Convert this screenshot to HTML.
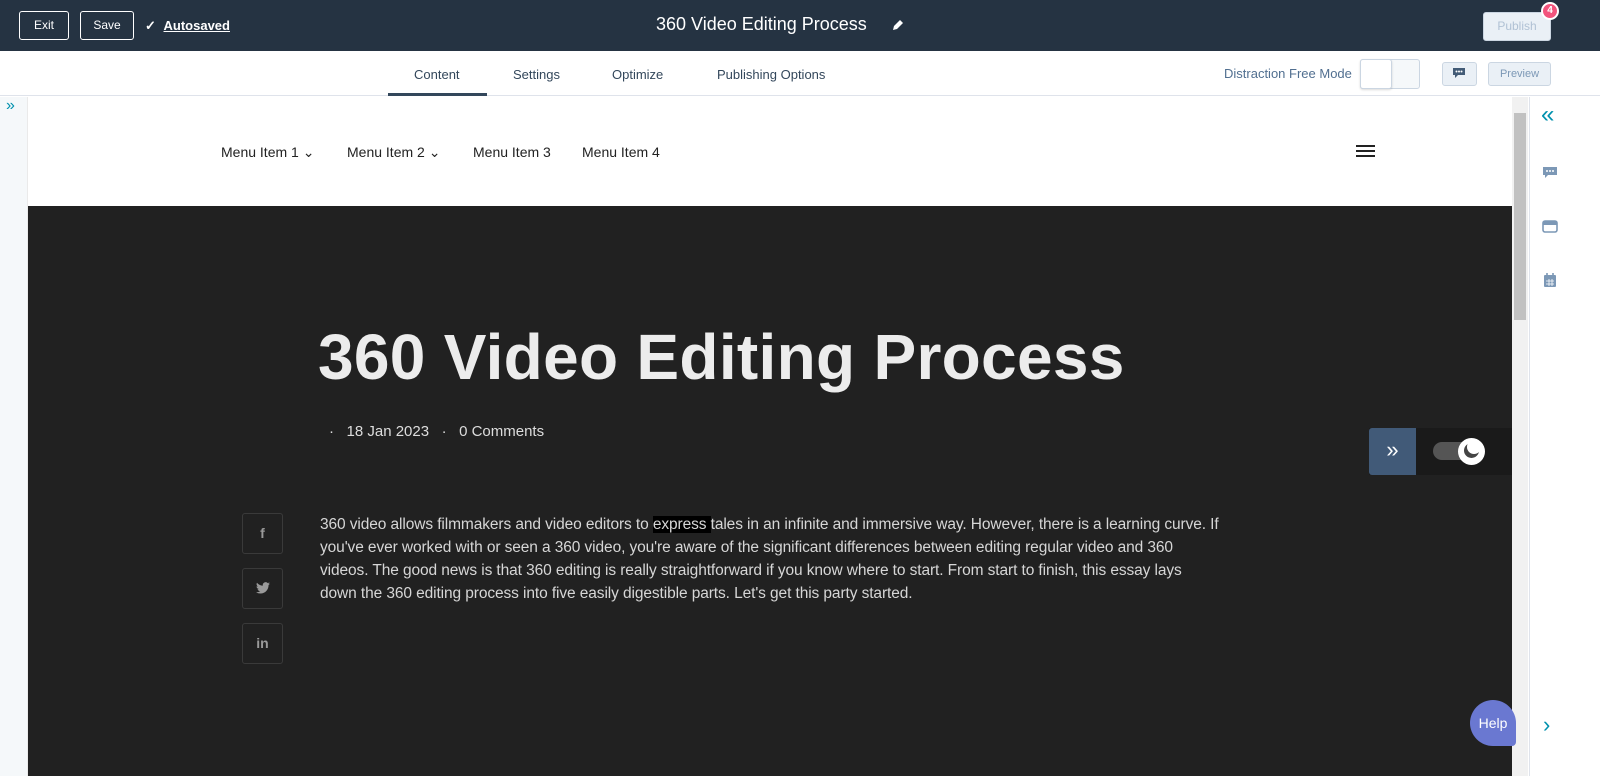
<!DOCTYPE html>
<html><head><style>
*{margin:0;padding:0;box-sizing:border-box}
body{width:1600px;height:776px;overflow:hidden;font-family:"Liberation Sans",sans-serif;background:#fff;position:relative}
.a{position:absolute}
.top{left:0;top:0;width:1600px;height:51px;background:#253342}
.btn{border:1px solid #fff;border-radius:3px;color:#fff;font-size:12px;height:29px;line-height:27px;text-align:center}
.tabs{top:51px;left:0;width:1600px;height:45px;border-bottom:1px solid #dfe3eb;background:#fff}
.tab{top:67px;font-size:13px;color:#33475b}
.dark{left:28px;top:206px;width:1484px;height:570px;background:#212121}
.soc{width:41px;height:41px;border:1px solid #3a3a3a;border-radius:3px;left:242px;color:#9a9a9a;font-size:14px;font-weight:bold;text-align:center;line-height:39px}
</style></head><body>
<div class="a top"></div>
<div class="a btn" style="left:19px;top:11px;width:50px">Exit</div>
<div class="a btn" style="left:80px;top:11px;width:54px">Save</div>
<div class="a" style="left:145px;top:18px;color:#fff;font-size:13px;font-weight:bold">✓ <u style="margin-left:4px">Autosaved</u></div>
<div class="a" style="left:656px;top:14px;color:#fff;font-size:18px">360 Video Editing Process</div>
<svg class="a" style="left:891px;top:18px" width="14" height="14" viewBox="0 0 14 14"><path d="M2 12l1-4 6-6 3 3-6 6z" fill="#fff"/></svg>
<div class="a" style="left:1483px;top:12px;width:68px;height:29px;background:#eaf0f6;border:1px solid #cbd6e2;border-radius:3px;color:#b0c1d4;font-size:12px;text-align:center;line-height:27px">Publish</div>
<div class="a" style="left:1541px;top:2px;width:18px;height:18px;border-radius:50%;background:#f2547d;border:2px solid #fff;color:#fff;font-size:10px;font-weight:bold;text-align:center;line-height:14px">4</div>
<div class="a tabs"></div>
<div class="a tab" style="left:414px;color:#33475b">Content</div>
<div class="a" style="left:388px;top:93px;width:99px;height:3px;background:#33475b"></div>
<div class="a tab" style="left:513px">Settings</div>
<div class="a tab" style="left:612px">Optimize</div>
<div class="a tab" style="left:717px">Publishing Options</div>
<div class="a" style="left:1224px;top:66px;font-size:13px;color:#516f90">Distraction Free Mode</div>
<div class="a" style="left:1360px;top:59px;width:60px;height:30px;background:#f5f8fa;border:1px solid #cbd6e2;border-radius:3px"></div>
<div class="a" style="left:1360px;top:59px;width:32px;height:30px;background:#fff;border:1px solid #cbd6e2;border-radius:3px;box-shadow:0 1px 2px rgba(0,0,0,.15)"></div>
<div class="a" style="left:1442px;top:62px;width:35px;height:24px;background:#eaf0f6;border:1px solid #cbd6e2;border-radius:3px"></div>
<svg class="a" style="left:1452px;top:67px" width="14" height="12" viewBox="0 0 14 12"><path d="M1 1h12v7H6l-3 3V8H1z" fill="#425b76"/><circle cx="4.5" cy="4.5" r="1" fill="#fff"/><circle cx="7" cy="4.5" r="1" fill="#fff"/><circle cx="9.5" cy="4.5" r="1" fill="#fff"/></svg>
<div class="a" style="left:1488px;top:62px;width:63px;height:24px;background:#eaf0f6;border:1px solid #cbd6e2;border-radius:3px;color:#7c98b6;font-size:11px;text-align:center;line-height:22px">Preview</div>
<div class="a" style="left:0;top:97px;width:28px;height:679px;background:#f5f8fa;border-right:1px solid #eaeaea"></div>
<div class="a" style="left:6px;top:97px;color:#0091ae;font-size:16px">»</div>
<div class="a" style="left:1512px;top:97px;width:16px;height:679px;background:#f1f1f1"></div>
<div class="a" style="left:1514px;top:113px;width:12px;height:207px;background:#c1c1c1"></div>
<div class="a" style="left:1529px;top:97px;width:71px;height:679px;background:#fff;border-left:1px solid #dfe3eb"></div>
<div class="a" style="left:1541px;top:101px;color:#0091ae;font-size:24px">«</div>
<svg class="a" style="left:1542px;top:166px" width="16" height="14" viewBox="0 0 16 14"><path d="M1 1h14v8H6l-3 3V9H1z" fill="#7c98b6"/><circle cx="5" cy="5" r="1" fill="#fff"/><circle cx="8" cy="5" r="1" fill="#fff"/><circle cx="11" cy="5" r="1" fill="#fff"/></svg>
<svg class="a" style="left:1542px;top:220px" width="16" height="14" viewBox="0 0 16 14"><rect x="1" y="1" width="14" height="11" rx="2" fill="none" stroke="#7c98b6" stroke-width="1.6"/><rect x="1" y="1" width="14" height="4" fill="#7c98b6"/></svg>
<svg class="a" style="left:1543px;top:272px" width="14" height="16" viewBox="0 0 14 16"><rect x="1" y="3" width="12" height="12" rx="1" fill="#7c98b6"/><path d="M4 1v4M10 1v4" stroke="#7c98b6" stroke-width="1.6"/><path d="M3 9h8M3 12h8M6 7v7M9 7v7" stroke="#fff" stroke-width=".8"/></svg>
<div class="a" style="left:1543px;top:712px;color:#0091ae;font-size:22px">›</div>
<div class="a" style="left:221px;top:144px;font-size:14px;color:#222">Menu Item 1 ⌄</div>
<div class="a" style="left:347px;top:144px;font-size:14px;color:#222">Menu Item 2 ⌄</div>
<div class="a" style="left:473px;top:144px;font-size:14px;color:#222">Menu Item 3</div>
<div class="a" style="left:582px;top:144px;font-size:14px;color:#222">Menu Item 4</div>
<div class="a" style="left:1356px;top:145px;width:19px;height:2px;background:#222;box-shadow:0 5px 0 #222,0 10px 0 #222"></div>
<div class="a dark"></div>
<div class="a" style="left:318px;top:320px;font-size:64px;font-weight:bold;color:#ececec;letter-spacing:0.3px">360 Video Editing Process</div>
<div class="a" style="left:329px;top:423px;font-size:15px;color:#ddd">·&nbsp;&nbsp;&nbsp;18 Jan 2023&nbsp;&nbsp;&nbsp;·&nbsp;&nbsp;&nbsp;0 Comments</div>
<div class="a" style="left:1369px;top:428px;width:143px;height:47px;background:#1a1a1a"></div>
<div class="a" style="left:1369px;top:428px;width:47px;height:47px;background:#415a78;border-radius:3px 0 0 3px;color:#fff;font-size:22px;text-align:center;line-height:44px">»</div>
<div class="a" style="left:1433px;top:442px;width:50px;height:18px;background:#555;border-radius:9px"></div>
<div class="a" style="left:1458px;top:438px;width:27px;height:27px;background:#fff;border-radius:50%"></div>
<div class="a" style="left:1464px;top:443px;width:15px;height:15px;border-radius:50%;background:#444"></div>
<div class="a" style="left:1467px;top:440px;width:14px;height:14px;border-radius:50%;background:#fff"></div>
<div class="a soc" style="top:513px">f</div>
<div class="a soc" style="top:568px"><svg width="14" height="12" viewBox="0 0 24 20" style="margin-top:13px"><path d="M24 2.4a10 10 0 0 1-2.8.8A5 5 0 0 0 23.3.4a10 10 0 0 1-3.1 1.2A4.9 4.9 0 0 0 11.8 6 14 14 0 0 1 1.7.9a4.9 4.9 0 0 0 1.5 6.6A5 5 0 0 1 1 6.9a4.9 4.9 0 0 0 3.9 4.9 5 5 0 0 1-2.2.1 4.9 4.9 0 0 0 4.6 3.4A9.9 9.9 0 0 1 0 17.3 14 14 0 0 0 7.5 19.5c9 0 14-7.5 14-14v-.6A10 10 0 0 0 24 2.4z" fill="#9a9a9a"/></svg></div>
<div class="a soc" style="top:623px">in</div>
<div class="a" style="left:320px;top:513px;white-space:nowrap;font-size:15.5px;line-height:23px;color:#d6d6d6;letter-spacing:-0.1px">360 video allows filmmakers and video editors to <span style="background:#000">express </span>tales in an infinite and immersive way. However, there is a learning curve. If<br>you've ever worked with or seen a 360 video, you're aware of the significant differences between editing regular video and 360<br>videos. The good news is that 360 editing is really straightforward if you know where to start. From start to finish, this essay lays<br>down the 360 editing process into five easily digestible parts. Let's get this party started.</div>
<div class="a" style="left:1470px;top:700px;width:46px;height:46px;background:#6a78d1;border-radius:23px 23px 4px 23px;color:#fff;font-size:14px;text-align:center;line-height:46px">Help</div>
</body></html>
